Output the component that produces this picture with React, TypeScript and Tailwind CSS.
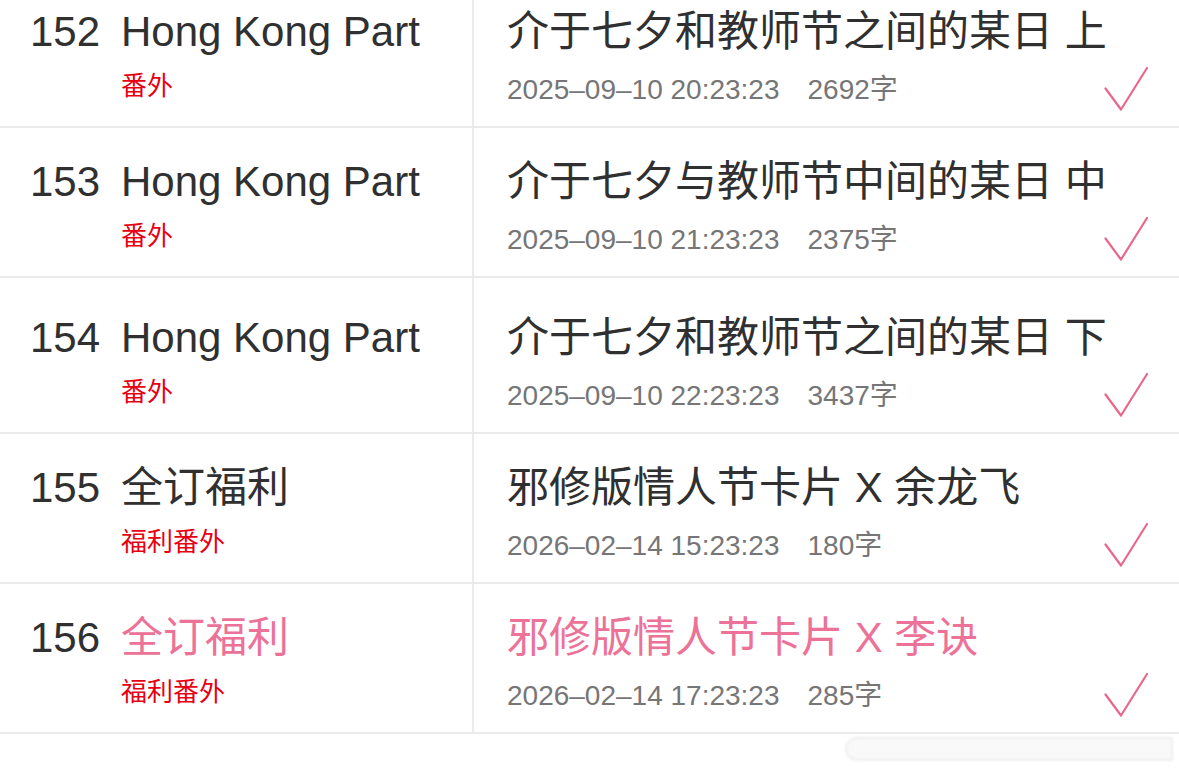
import React from 'react';

interface Chapter {
  no: number;
  title: string;
  tag: string;
  name: string;
  time: string;
  words: number;
  highlight?: boolean;
  extraTop?: boolean;
}

const chapters: Chapter[] = [
  { no: 152, title: 'Hong Kong Part', tag: '番外', name: '介于七夕和教师节之间的某日 上', time: '2025–09–10 20:23:23', words: 2692 },
  { no: 153, title: 'Hong Kong Part', tag: '番外', name: '介于七夕与教师节中间的某日 中', time: '2025–09–10 21:23:23', words: 2375 },
  { no: 154, title: 'Hong Kong Part', tag: '番外', name: '介于七夕和教师节之间的某日 下', time: '2025–09–10 22:23:23', words: 3437, extraTop: true },
  { no: 155, title: '全订福利', tag: '福利番外', name: '邪修版情人节卡片 X 余龙飞', time: '2026–02–14 15:23:23', words: 180 },
  { no: 156, title: '全订福利', tag: '福利番外', name: '邪修版情人节卡片 X 李诀', time: '2026–02–14 17:23:23', words: 285, highlight: true },
];

const font = { fontFamily: '"Liberation Sans", "Noto Sans CJK SC", sans-serif' };

const Check = () => (
  <svg width="44" height="44" viewBox="0 0 44 44" fill="none" className="mr-[31px] mb-[15px] shrink-0">
    <path d="M1.5 21.5 L17 42.5 L43 1" stroke="#e8688c" strokeWidth="2.2" strokeLinecap="round" strokeLinejoin="round" />
  </svg>
);

const ChapterRow: React.FC<{ c: Chapter }> = ({ c }) => {
  const titleColor = c.highlight ? 'text-[#ec7298]' : 'text-[#303030]';
  return (
    <div
      className={`flex border-b-2 border-[#ebebeb] ${c.extraTop ? 'h-[156px]' : 'h-[150px]'}`}
    >
      {/* left: number + part */}
      <div
        className={`w-[474px] shrink-0 border-r-2 border-[#ebebeb] flex pl-[30px] ${
          c.extraTop ? 'pt-[39px]' : 'pt-[33px]'
        }`}
      >
        <div className="w-[91px] h-[42px] leading-[42px] text-[42px] text-[#303030]">{c.no}</div>
        <div className="flex flex-col">
          <div className={`h-[42px] leading-[42px] text-[42px] whitespace-nowrap ${titleColor}`}>{c.title}</div>
          <div className="mt-[20px] h-[26px] leading-[26px] text-[26px] text-[#e60012]">{c.tag}</div>
        </div>
      </div>

      {/* right: chapter name + meta */}
      <div className="flex-1 min-w-0 flex items-end">
        <div className={`flex-1 min-w-0 self-start pl-[33px] ${c.extraTop ? 'pt-[39px]' : 'pt-[33px]'}`}>
          <div className={`h-[42px] leading-[42px] text-[42px] whitespace-nowrap ${titleColor}`}>{c.name}</div>
          <div className="mt-[23px] h-[28px] leading-[28px] text-[28px] text-[#767676] flex gap-[28px] whitespace-nowrap">
            <span>{c.time}</span>
            <span>{c.words}字</span>
          </div>
        </div>
        <Check />
      </div>
    </div>
  );
};

export default function App() {
  return (
    <div className="relative w-[1179px] h-[773px] overflow-hidden bg-white" style={font}>
      <div className="mt-[-22px]">
        {chapters.map((c) => (
          <ChapterRow key={c.no} c={c} />
        ))}
      </div>
      {/* faint watermark */}
      <div className="absolute left-[845px] top-[737px] w-[328px] h-[24px] rounded-l-full border-2 border-[#e4e4e4] bg-[#f6f6f6] opacity-60 blur-[1px]" />
    </div>
  );
}
